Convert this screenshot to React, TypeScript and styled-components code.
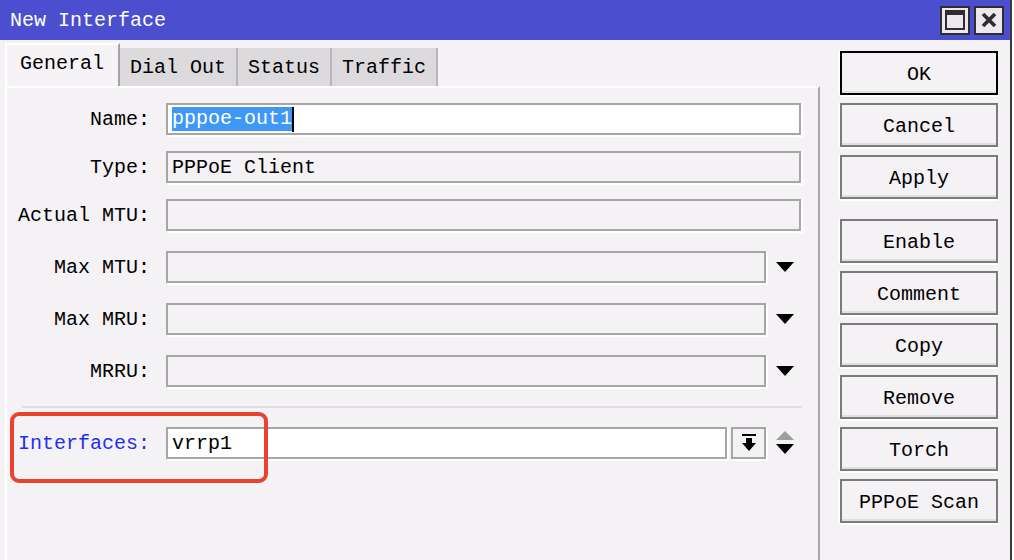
import React from "react";
import styled, { createGlobalStyle } from "styled-components";

const Global = createGlobalStyle`
  html, body { margin: 0; padding: 0; background: #ffffff; }
  body { font-family: "Liberation Mono", "DejaVu Sans Mono", monospace; font-size: 20px; color: #000; }
`;

const Window = styled.div`
  width: 1012px;
  height: 560px;
  box-sizing: border-box;
  border-right: 2px solid #3a3a3a;
  background: #f5f2f5;
  display: flex;
  flex-direction: column;
  overflow: hidden;
`;

const TitleBar = styled.div`
  height: 40px;
  flex-shrink: 0;
  background: #4b4ece;
  display: flex;
  align-items: center;
  padding: 0 6px 0 10px;
  color: #fff;
`;

const Title = styled.span`
  flex: 1;
  font-size: 20px;
  line-height: 1;
  padding-top: 2px;
`;

const TitleBtn = styled.div`
  width: 30px;
  height: 29px;
  box-sizing: border-box;
  border: 2px solid #2e2e2e;
  background: #ece8ee;
  display: flex;
  align-items: center;
  justify-content: center;
  margin-left: 4px;
`;

const Body = styled.div`
  flex: 1;
  display: flex;
  min-height: 0;
`;

const TabArea = styled.div`
  margin-left: 5px;
  width: 815px;
  padding-top: 3px;
  display: flex;
  flex-direction: column;
`;

const TabStrip = styled.div`
  height: 43px;
  display: flex;
  align-items: flex-end;
  flex-shrink: 0;
`;

const Tab = styled.div<{ $active?: boolean }>`
  box-sizing: border-box;
  height: ${(p) => (p.$active ? 43 : 38)}px;
  padding: ${(p) => (p.$active ? "0 14px 0 13px" : "0 10px")};
  display: flex;
  align-items: center;
  background: ${(p) => (p.$active ? "#f6f3f6" : "#dcdadc")};
  border-top: ${(p) => (p.$active ? "2px solid #fff" : "none")};
  border-left: ${(p) => (p.$active ? "2px solid #fff" : "none")};
  border-right: 2px solid ${(p) => (p.$active ? "#a4a4a4" : "#b8b6b8")};
  padding-bottom: ${(p) => (p.$active ? 4 : 0)}px;
  white-space: pre;
  font-size: 20px;
`;

const Panel = styled.div`
  flex: 1;
  position: relative;
  box-sizing: border-box;
  border-top: 2px solid #fff;
  border-left: 2px solid #fff;
  border-right: 2px solid #a8a8a8;
  padding: 15px 17px 0 0;
  background: #f5f2f5;
`;

const Row = styled.div<{ $mt: number }>`
  display: flex;
  align-items: center;
  height: 32px;
  margin-top: ${(p) => p.$mt}px;
`;

const Label = styled.div<{ $link?: boolean }>`
  width: 143px;
  flex-shrink: 0;
  margin-right: 16px;
  text-align: right;
  white-space: pre;
  color: ${(p) => (p.$link ? "#1f2ef2" : "#000")};
`;

const Field = styled.div<{ $bg: string }>`
  flex: 1;
  min-width: 0;
  height: 32px;
  box-sizing: border-box;
  border: 2px solid #a6a6a6;
  background: ${(p) => p.$bg};
  box-shadow: 2px 2px 0 #fff;
  padding: 0 4px;
  display: flex;
  align-items: center;
  white-space: pre;
`;

const Selected = styled.span`
  background: #3f97f6;
  color: #fff;
  height: 24px;
  line-height: 24px;
`;

const Caret = styled.span`
  width: 2px;
  height: 25px;
  background: #000;
`;

const FieldButton = styled.div`
  width: 35px;
  height: 32px;
  flex-shrink: 0;
  margin-left: 4px;
  box-sizing: border-box;
  border: 2px solid #a6a6a6;
  background: #f5f2f5;
  box-shadow: 2px 2px 0 #fff;
  display: flex;
  align-items: center;
  justify-content: center;
`;

const ArrowSlot = styled.div`
  width: 35px;
  flex-shrink: 0;
  box-sizing: border-box;
  padding-left: 10px;
  display: flex;
  align-items: center;
`;

const Separator = styled.div`
  margin: 19px -1px 0 15px;
  height: 2px;
  background: #e0dde0;
`;

const Highlight = styled.div`
  position: absolute;
  left: 3px;
  top: 324px;
  width: 258px;
  height: 71px;
  box-sizing: border-box;
  border: 4px solid #e8432e;
  border-radius: 9px;
  pointer-events: none;
`;

const ButtonColumn = styled.div`
  margin-left: 20px;
  width: 158px;
  padding-top: 11px;
  display: flex;
  flex-direction: column;
`;

const Button = styled.div<{ $default?: boolean; $mt: number }>`
  height: 44px;
  box-sizing: border-box;
  margin-top: ${(p) => p.$mt}px;
  border: 2px solid ${(p) => (p.$default ? "#000" : "#7b7b7b")};
  background: #f5f2f5;
  box-shadow: inset 0 -2px 0 #e2e0e2, 0 2px 0 #fff, -2px 0 0 #fff;
  display: flex;
  align-items: center;
  justify-content: center;
  white-space: pre;
  padding-top: 2px;
`;

const DownArrow = ({ color = "#000" }: { color?: string }) => (
  <svg width="18" height="11" viewBox="0 0 18 11">
    <polygon points="0,0 18,0 9,10" fill={color} />
  </svg>
);

const UpDown = () => (
  <svg width="18" height="24" viewBox="0 0 18 24">
    <polygon points="9,0 18,9 0,9" fill="#9aa09a" />
    <polygon points="0,13 18,13 9,23" fill="#000" />
  </svg>
);

const PickIcon = () => (
  <svg width="16" height="18" viewBox="0 0 16 18">
    <rect x="1" y="0" width="14" height="2" fill="#000" />
    <rect x="5" y="4" width="6" height="5" fill="#000" />
    <polygon points="1,9 15,9 8,17" fill="#000" />
  </svg>
);

const MaxIcon = () => (
  <svg width="20" height="20" viewBox="0 0 20 20">
    <rect x="1" y="1" width="18" height="18" fill="none" stroke="#2e2e2e" strokeWidth="2" />
    <rect x="1" y="1" width="18" height="4" fill="#2e2e2e" />
  </svg>
);

const CloseIcon = () => (
  <svg width="16" height="14" viewBox="0 0 16 14">
    <path d="M2 1 L14 13 M14 1 L2 13" stroke="#2e2e2e" strokeWidth="3.6" />
  </svg>
);

const buttons: { label: string; mt: number; def?: boolean }[] = [
  { label: "OK", mt: 0, def: true },
  { label: "Cancel", mt: 8 },
  { label: "Apply", mt: 8 },
  { label: "Enable", mt: 20 },
  { label: "Comment", mt: 8 },
  { label: "Copy", mt: 8 },
  { label: "Remove", mt: 8 },
  { label: "Torch", mt: 8 },
  { label: "PPPoE Scan", mt: 8 },
];

export default function App() {
  return (
    <>
      <Global />
      <Window>
        <TitleBar>
          <Title>New Interface</Title>
          <TitleBtn>
            <MaxIcon />
          </TitleBtn>
          <TitleBtn>
            <CloseIcon />
          </TitleBtn>
        </TitleBar>
        <Body>
          <TabArea>
            <TabStrip>
              <Tab $active>General</Tab>
              <Tab>Dial Out</Tab>
              <Tab>Status</Tab>
              <Tab>Traffic</Tab>
            </TabStrip>
            <Panel>
              <Row $mt={0}>
                <Label>Name:</Label>
                <Field $bg="#ffffff">
                  <Selected>pppoe-out1</Selected>
                  <Caret />
                </Field>
              </Row>
              <Row $mt={16}>
                <Label>Type:</Label>
                <Field $bg="#f5f2f5">PPPoE Client</Field>
              </Row>
              <Row $mt={16}>
                <Label>Actual MTU:</Label>
                <Field $bg="#f5f2f5" />
              </Row>
              <Row $mt={20}>
                <Label>Max MTU:</Label>
                <Field $bg="#f5f2f5" />
                <ArrowSlot>
                  <DownArrow />
                </ArrowSlot>
              </Row>
              <Row $mt={20}>
                <Label>Max MRU:</Label>
                <Field $bg="#f5f2f5" />
                <ArrowSlot>
                  <DownArrow />
                </ArrowSlot>
              </Row>
              <Row $mt={20}>
                <Label>MRRU:</Label>
                <Field $bg="#f5f2f5" />
                <ArrowSlot>
                  <DownArrow />
                </ArrowSlot>
              </Row>
              <Separator />
              <Row $mt={19}>
                <Label $link>Interfaces:</Label>
                <Field $bg="#ffffff">vrrp1</Field>
                <FieldButton>
                  <PickIcon />
                </FieldButton>
                <ArrowSlot>
                  <UpDown />
                </ArrowSlot>
              </Row>
              <Highlight />
            </Panel>
          </TabArea>
          <ButtonColumn>
            {buttons.map((b) => (
              <Button key={b.label} $mt={b.mt} $default={b.def}>
                {b.label}
              </Button>
            ))}
          </ButtonColumn>
        </Body>
      </Window>
    </>
  );
}
